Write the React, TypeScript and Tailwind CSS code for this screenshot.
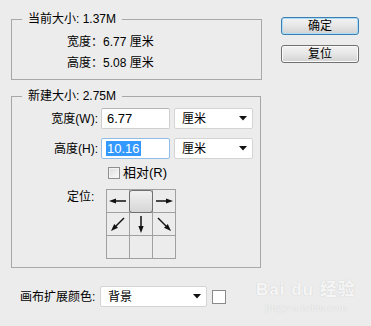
import React from "react";

const F = "font-['Liberation_Sans','Noto_Sans_CJK_SC',sans-serif]";

function Arrow({ dir }: { dir: "l" | "r" | "d" | "dl" | "dr" }) {
  return (
    <svg width="22" height="22" viewBox="0 0 22 22">
      {dir === "l" && (
        <>
          <line x1="19" y1="11" x2="8" y2="11" stroke="#111" strokeWidth="1.5" />
          <polygon points="2,11 9,8.4 9,13.6" fill="#111" />
        </>
      )}
      {dir === "r" && (
        <>
          <line x1="3" y1="11" x2="14" y2="11" stroke="#111" strokeWidth="1.5" />
          <polygon points="20,11 13,8.4 13,13.6" fill="#111" />
        </>
      )}
      {dir === "d" && (
        <>
          <line x1="11" y1="3" x2="11" y2="14" stroke="#111" strokeWidth="1.5" />
          <polygon points="11,20 8.4,13 13.6,13" fill="#111" />
        </>
      )}
      {dir === "dl" && (
        <>
          <line x1="17" y1="5" x2="9" y2="13" stroke="#111" strokeWidth="1.5" />
          <polygon points="4,18 11,14.8 7.2,11" fill="#111" />
        </>
      )}
      {dir === "dr" && (
        <>
          <line x1="5" y1="5" x2="13" y2="13" stroke="#111" strokeWidth="1.5" />
          <polygon points="18,18 11,14.8 14.8,11" fill="#111" />
        </>
      )}
    </svg>
  );
}

function Caret() {
  return (
    <svg width="8" height="5" viewBox="0 0 8 5">
      <polygon points="0,0 8,0 4,4.5" fill="#111" />
    </svg>
  );
}

function Select({ text, w }: { text: string; w: string }) {
  return (
    <div
      className={`${w} h-[21px] bg-white border border-[#d4d4d4] rounded-[2px] flex items-center justify-between pl-[7px] pr-[5px]`}
    >
      <span>{text}</span>
      <Caret />
    </div>
  );
}

export default function App() {
  return (
    <div
      className={`relative w-[371px] h-[326px] overflow-hidden bg-[#ececec] text-[12px] leading-[16px] text-black ${F}`}
    >
      <div className="flex pl-[11px] pt-[11px]">
        <div className="flex flex-col w-[251px]">
          <fieldset className="border border-[#a8a8a8] h-[69px] w-[251px]">
            <legend className="ml-[10px] px-[6px]">当前大小: 1.37M</legend>
            <div className="flex flex-col pl-[55px] pt-[7px] gap-[5px]">
              <div className="h-[16px]">宽度：6.77 厘米</div>
              <div className="h-[16px]">高度：5.08 厘米</div>
            </div>
          </fieldset>

          <fieldset className="border border-[#a8a8a8] h-[180px] w-[250px] mt-[8px]">
            <legend className="ml-[10px] px-[6px]">新建大小: 2.75M</legend>
            <div className="flex flex-col pt-[4px]">
              <div className="flex items-center h-[21px]">
                <div className="w-[86px] text-right">宽度(W):</div>
                <div className="ml-[3px] w-[69px] h-[21px] bg-white border border-[#cfcfcf] border-t-[#b5b5b5] rounded-[2px] flex items-center pl-[5px] text-[13px]">
                  6.77
                </div>
                <div className="ml-[4px]">
                  <Select text="厘米" w="w-[79px]" />
                </div>
              </div>
              <div className="flex items-center h-[21px] mt-[9px]">
                <div className="w-[86px] text-right">高度(H):</div>
                <div className="ml-[3px] w-[69px] h-[21px] bg-white border border-[#8fbde8] rounded-[2px] flex items-center pl-[4px] text-[13px]">
                  <span className="bg-[#3399ff] text-white px-[1px] leading-[15px]">10.16</span>
                </div>
                <div className="ml-[4px]">
                  <Select text="厘米" w="w-[79px]" />
                </div>
              </div>
              <div className="flex items-center h-[16px] mt-[6px] pl-[96px]">
                <div className="w-[12px] h-[12px] border border-[#8e8f8f] bg-gradient-to-br from-[#dcdcdc] to-[#fbfbfb] shadow-[inset_0_0_0_1px_#f4f4f4]" />
                <span className="ml-[3px] text-[13px]">相对(R)</span>
              </div>
              <div className="flex mt-[8px]">
                <div className="w-[94px] pl-[55px]">定位:</div>
                <div className="grid grid-cols-3 gap-px p-px bg-[#a0a0a0]">
                  <div className="w-[22px] h-[22px] bg-[#ececec] flex items-center justify-center">
                    <Arrow dir="l" />
                  </div>
                  <div className="w-[22px] h-[22px] bg-[#ececec] flex items-center justify-center">
                    <div className="w-[24px] h-[23px] -m-[1px] rounded-[3px] border border-[#6f6f6f] bg-gradient-to-b from-[#f1f1f1] to-[#d6d6d6]" />
                  </div>
                  <div className="w-[22px] h-[22px] bg-[#ececec] flex items-center justify-center">
                    <Arrow dir="r" />
                  </div>
                  <div className="w-[22px] h-[22px] bg-[#ececec] flex items-center justify-center">
                    <Arrow dir="dl" />
                  </div>
                  <div className="w-[22px] h-[22px] bg-[#ececec] flex items-center justify-center">
                    <Arrow dir="d" />
                  </div>
                  <div className="w-[22px] h-[22px] bg-[#ececec] flex items-center justify-center">
                    <Arrow dir="dr" />
                  </div>
                  <div className="w-[22px] h-[22px] bg-[#ececec]" />
                  <div className="w-[22px] h-[22px] bg-[#ececec]" />
                  <div className="w-[22px] h-[22px] bg-[#ececec]" />
                </div>
              </div>
            </div>
          </fieldset>
        </div>

        <div className="flex flex-col ml-[19px] mt-[6px] gap-[10px]">
          <div className="w-[78px] h-[18px] rounded-[3px] border border-[#3c7fb1] shadow-[inset_0_0_0_1px_#a9dcf6] bg-gradient-to-b from-[#f2f2f2] via-[#e6e6e6] to-[#d2d2d2] flex items-center justify-center">
            确定
          </div>
          <div className="w-[78px] h-[18px] rounded-[3px] border border-[#707070] shadow-[inset_0_0_0_1px_#fbfbfb] bg-gradient-to-b from-[#f2f2f2] via-[#e6e6e6] to-[#d2d2d2] flex items-center justify-center">
            复位
          </div>
        </div>
      </div>

      <div className="flex items-center mt-[18px] pl-[20px]">
        <div className="w-[80px]">画布扩展颜色:</div>
        <Select text="背景" w="w-[107px]" />
        <div className="ml-[5px] w-[14px] h-[14px] bg-white border border-[#8a8a8a]" />
      </div>

      <div className="absolute left-[256px] top-[280px] flex flex-col items-center text-[#f6f6f6] [text-shadow:0_0_1px_#d2d2d2,0_0_1px_#d2d2d2] select-none">
        <div className="text-[17px] leading-[20px] font-bold tracking-[1px]">Bai du 经验</div>
        <div className="text-[11px] leading-[14px] font-['Liberation_Serif',serif]">jingyan.baidu.com</div>
      </div>
    </div>
  );
}
